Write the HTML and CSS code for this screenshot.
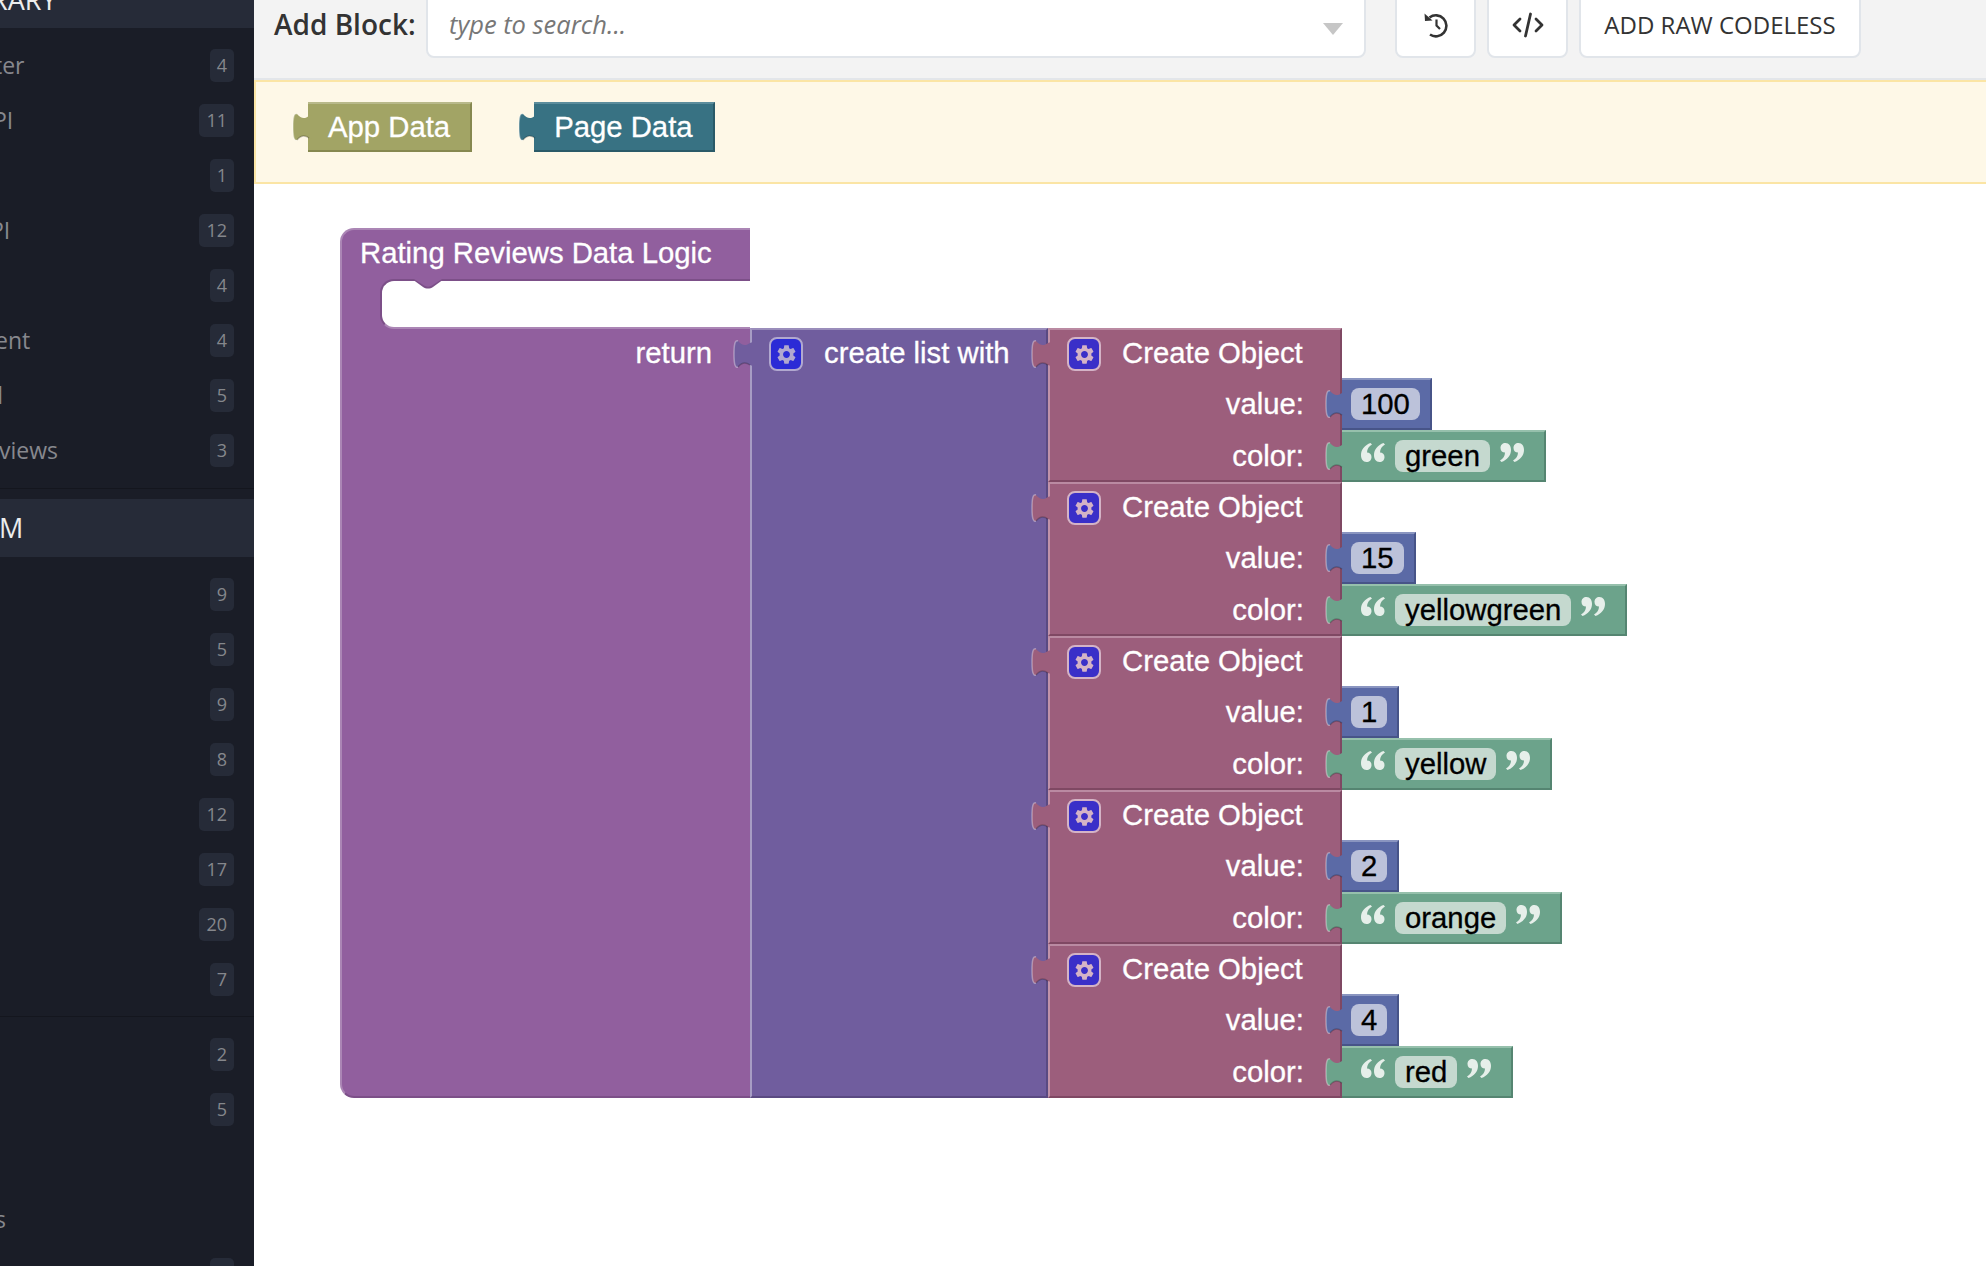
FILE: index.html
```html
<!DOCTYPE html>
<html lang="en">
<head>
    <meta charset="UTF-8">
    <title>Rating Reviews Data Logic</title>
    <link rel="stylesheet" href="styles.css">
</head>
<body>
    <svg class="sprite" xmlns="http://www.w3.org/2000/svg">
      <symbol id="tab" viewBox="0 0 20 28">
        <path d="M20 2L17 3C13 6 9 6 5 1C2 0 1 4 1 14C1 24 2 28 5 27C9 22 13 22 17 25L20 26Z"/>
        <path d="M5 1C2 0 1 4 1 14C1 24 2 28 5 27" fill="none" stroke="#fff" stroke-opacity=".35" stroke-width="1.5"/>
        <path d="M5 27C9 22 13 22 17 25" fill="none" stroke="#000" stroke-opacity=".22" stroke-width="1.5"/>
      </symbol>
      <symbol id="gear" viewBox="0 0 24 24">
        <path fill-rule="evenodd" d="M19.14 12.94c.04-.3.06-.61.06-.94 0-.32-.02-.64-.07-.94l2.03-1.58c.18-.14.23-.41.12-.61l-1.92-3.32c-.12-.22-.37-.29-.59-.22l-2.39.96c-.5-.38-1.03-.7-1.62-.94l-.36-2.54c-.04-.24-.24-.41-.48-.41h-3.84c-.24 0-.43.17-.47.41l-.36 2.54c-.59.24-1.13.57-1.62.94l-2.39-.96c-.22-.08-.47 0-.59.22L2.74 8.87c-.12.21-.08.47.12.61l2.03 1.58c-.05.3-.09.63-.09.94s.02.64.07.94l-2.03 1.58c-.18.14-.23.41-.12.61l1.92 3.32c.12.22.37.29.59.22l2.39-.96c.5.38 1.03.7 1.62.94l.36 2.54c.05.24.24.41.48.41h3.84c.24 0 .44-.17.47-.41l.36-2.54c.59-.24 1.13-.56 1.62-.94l2.39.96c.22.08.47 0 .59-.22l1.92-3.32c.12-.22.07-.47-.12-.61l-2.01-1.58zM12 15.6c-1.98 0-3.6-1.62-3.6-3.6s1.62-3.6 3.6-3.6 3.6 1.62 3.6 3.6-1.62 3.6-3.6 3.6z"/>
      </symbol>
      <symbol id="quote" viewBox="0 0 24 19">
        <path d="M9.5 0C4 2 0 6.500 0 12C0 16 2 19 5.500 19C8.500 19 10.500 17 10.500 14C10.500 11 8.500 9.500 6 9.500C6 6 8 3 11 1.500Z"/>
        <path d="M22.500 0C17 2 13 6.500 13 12C13 16 15 19 18.500 19C21.500 19 23.500 17 23.500 14C23.500 11 21.500 9.500 19 9.500C19 6 21 3 24 1.500Z"/>
      </symbol>
    </svg>

    <div class="app">
      <!-- barra lateral, cortada na esquerda como no original -->
      <aside class="sidebar">
        <div class="side-head side-head-top"><span>RARY</span></div>
        <ul class="side-list">
          <li><span class="side-label cut-ter">ter</span><span class="badge">4</span></li>
          <li><span class="side-label cut-pi">PI</span><span class="badge">11</span></li>
          <li><span class="side-label"></span><span class="badge">1</span></li>
          <li><span class="side-label cut-pi2">PI</span><span class="badge">12</span></li>
          <li><span class="side-label"></span><span class="badge">4</span></li>
          <li><span class="side-label cut-ent">ent</span><span class="badge">4</span></li>
          <li><span class="side-label cut-d">d</span><span class="badge">5</span></li>
          <li><span class="side-label cut-views">views</span><span class="badge">3</span></li>
        </ul>
        <div class="side-head"><span>M</span></div>
        <ul class="side-list side-list-mid">
          <li><span class="side-label"></span><span class="badge">9</span></li>
          <li><span class="side-label"></span><span class="badge">5</span></li>
          <li><span class="side-label"></span><span class="badge">9</span></li>
          <li><span class="side-label"></span><span class="badge">8</span></li>
          <li><span class="side-label"></span><span class="badge">12</span></li>
          <li><span class="side-label"></span><span class="badge">17</span></li>
          <li><span class="side-label"></span><span class="badge">20</span></li>
          <li><span class="side-label"></span><span class="badge">7</span></li>
        </ul>
        <ul class="side-list side-list-last">
          <li><span class="side-label"></span><span class="badge">2</span></li>
          <li><span class="side-label"></span><span class="badge">5</span></li>
          <li><span class="side-label"></span></li>
          <li><span class="side-label cut-s">s</span></li>
          <li><span class="side-label"></span><span class="badge">3</span></li>
        </ul>
      </aside>

      <main class="main">
        <div class="toolbar">
          <label class="add-label">Add Block:</label>
          <div class="search">
            <span class="search-hint">type to search...</span>
            <span class="search-caret"></span>
          </div>
          <button class="tool-btn tool-icon">
            <svg width="26" height="26" viewBox="0 0 26 26" fill="none" stroke="#333" stroke-width="2.600">
              <path d="M6.500 5.500A10.500 10.500 0 1 1 7 22.500"/>
              <path d="M13.500 7.500V13.500L17 17" stroke-width="2.200"/>
              <path d="M1.500 1.500L2 9L9.500 8.500Z" fill="#333" stroke="none"/>
            </svg>
          </button>
          <button class="tool-btn tool-icon">
            <svg width="32" height="26" viewBox="0 0 32 26" fill="none" stroke="#333" stroke-width="2.800" stroke-linecap="round" stroke-linejoin="round">
              <path d="M8 7L2 13L8 19"/>
              <path d="M24 7L30 13L24 19"/>
              <path d="M18.500 2L13.500 24"/>
            </svg>
          </button>
          <button class="tool-btn tool-text">ADD RAW CODELESS</button>
        </div>

        <div class="banner">
          <div class="chip chip-app">
            <svg class="tab"><use href="#tab"/></svg>
            App Data
          </div>
          <div class="chip chip-page">
            <svg class="tab"><use href="#tab"/></svg>
            Page Data
          </div>
        </div>

        <div class="workspace">
          <div class="fn-hat">Rating Reviews Data Logic</div>
          <div class="fn-mouth">
            <div class="fn-gap">
              <svg class="fn-notch" width="32" height="11" viewBox="0 0 32 11">
                <path d="M0 0L11 8C14 10 18 10 21 8L32 0Z" fill="#7c4f88"/>
                <path d="M2 0L12 6.500C14.500 8 17.500 8 20 6.500L30 0Z" fill="#915f9e"/>
              </svg>
            </div>
          </div>
          <div class="fn-body">
            <div class="fn-return">return</div>
            <div class="list-block">
              <svg class="tab"><use href="#tab"/></svg>
              <div class="head-line">
                <span class="cog"><svg width="23" height="23"><use href="#gear"/></svg></span>
                create list with
              </div>
            </div>
            <div class="objects">

              <div class="obj">
                <div class="obj-face">
                  <svg class="tab"><use href="#tab"/></svg>
                  <div class="head-line">
                    <span class="cog"><svg width="23" height="23"><use href="#gear"/></svg></span>
                    Create Object
                  </div>
                  <div class="obj-label">value:</div>
                  <div class="obj-label">color:</div>
                </div>
                <div class="obj-inputs">
                  <div class="num">
                    <svg class="tab"><use href="#tab"/></svg>
                    <span class="field">100</span>
                  </div>
                  <div class="str">
                    <svg class="tab"><use href="#tab"/></svg>
                    <svg class="quote"><use href="#quote"/></svg>
                    <span class="field">green</span>
                    <svg class="quote quote-end"><use href="#quote"/></svg>
                  </div>
                </div>
              </div>

              <div class="obj">
                <div class="obj-face">
                  <svg class="tab"><use href="#tab"/></svg>
                  <div class="head-line">
                    <span class="cog"><svg width="23" height="23"><use href="#gear"/></svg></span>
                    Create Object
                  </div>
                  <div class="obj-label">value:</div>
                  <div class="obj-label">color:</div>
                </div>
                <div class="obj-inputs">
                  <div class="num">
                    <svg class="tab"><use href="#tab"/></svg>
                    <span class="field">15</span>
                  </div>
                  <div class="str">
                    <svg class="tab"><use href="#tab"/></svg>
                    <svg class="quote"><use href="#quote"/></svg>
                    <span class="field">yellowgreen</span>
                    <svg class="quote quote-end"><use href="#quote"/></svg>
                  </div>
                </div>
              </div>

              <div class="obj">
                <div class="obj-face">
                  <svg class="tab"><use href="#tab"/></svg>
                  <div class="head-line">
                    <span class="cog"><svg width="23" height="23"><use href="#gear"/></svg></span>
                    Create Object
                  </div>
                  <div class="obj-label">value:</div>
                  <div class="obj-label">color:</div>
                </div>
                <div class="obj-inputs">
                  <div class="num">
                    <svg class="tab"><use href="#tab"/></svg>
                    <span class="field">1</span>
                  </div>
                  <div class="str">
                    <svg class="tab"><use href="#tab"/></svg>
                    <svg class="quote"><use href="#quote"/></svg>
                    <span class="field">yellow</span>
                    <svg class="quote quote-end"><use href="#quote"/></svg>
                  </div>
                </div>
              </div>

              <div class="obj">
                <div class="obj-face">
                  <svg class="tab"><use href="#tab"/></svg>
                  <div class="head-line">
                    <span class="cog"><svg width="23" height="23"><use href="#gear"/></svg></span>
                    Create Object
                  </div>
                  <div class="obj-label">value:</div>
                  <div class="obj-label">color:</div>
                </div>
                <div class="obj-inputs">
                  <div class="num">
                    <svg class="tab"><use href="#tab"/></svg>
                    <span class="field">2</span>
                  </div>
                  <div class="str">
                    <svg class="tab"><use href="#tab"/></svg>
                    <svg class="quote"><use href="#quote"/></svg>
                    <span class="field">orange</span>
                    <svg class="quote quote-end"><use href="#quote"/></svg>
                  </div>
                </div>
              </div>

              <div class="obj">
                <div class="obj-face">
                  <svg class="tab"><use href="#tab"/></svg>
                  <div class="head-line">
                    <span class="cog"><svg width="23" height="23"><use href="#gear"/></svg></span>
                    Create Object
                  </div>
                  <div class="obj-label">value:</div>
                  <div class="obj-label">color:</div>
                </div>
                <div class="obj-inputs">
                  <div class="num">
                    <svg class="tab"><use href="#tab"/></svg>
                    <span class="field">4</span>
                  </div>
                  <div class="str">
                    <svg class="tab"><use href="#tab"/></svg>
                    <svg class="quote"><use href="#quote"/></svg>
                    <span class="field">red</span>
                    <svg class="quote quote-end"><use href="#quote"/></svg>
                  </div>
                </div>
              </div>

            </div>
          </div>
        </div>
      </main>
    </div>
</body>
</html>
```

FILE: styles.css
```css
* {
  box-sizing: border-box;
}

html, body {
  margin: 0;
  height: 100%;
  overflow: hidden;
  background: #fff;
}

.sprite {
  display: none;
}

.app {
  display: flex;
  height: 1266px;
  overflow: hidden;
}

/* sidebar */

.sidebar {
  flex: none;
  width: 254px;
  background: #1a1d27;
  overflow: hidden;
  font-family: "Open Sans", sans-serif;
}

.side-head {
  height: 58px;
  background: #262b38;
  color: #eceded;
  font-size: 27px;
  line-height: 58px;
  white-space: nowrap;
}

.side-head span {
  display: block;
  margin-left: -1px;
}

.side-head-top {
  height: 28px;
  line-height: 0;
}

.side-head-top span {
  margin-left: -9px;
}

.side-list {
  list-style: none;
  margin: 0 0 10px;
  padding: 10px 20px 10px 0;
  border-bottom: 1px solid #14161e;
}

.side-list li {
  display: flex;
  align-items: center;
  justify-content: space-between;
  height: 55px;
}

.side-list-mid {
  margin-bottom: 0;
  padding-bottom: 9px;
}

.side-list-last {
  margin: 0;
  padding-top: 10px;
  border: 0;
}

.side-label {
  padding-bottom: 1px;
  color: #87888e;
  font-size: 23px;
  white-space: nowrap;
}

.cut-ter { margin-left: -6px; }
.cut-pi { margin-left: -7px; }
.cut-pi2 { margin-left: -10px; }
.cut-ent { margin-left: -5px; }
.cut-d { margin-left: -11px; }
.cut-views { margin-left: -1px; }
.cut-s { margin-left: -5px; }

.badge {
  min-width: 23px;
  height: 33px;
  padding: 0 7px;
  border-radius: 5px;
  background: #262b38;
  color: #85878c;
  font-size: 18px;
  line-height: 33px;
  text-align: center;
}

/* toolbar */

.main {
  flex: 1;
  min-width: 0;
}

.toolbar {
  display: flex;
  align-items: flex-end;
  height: 80px;
  padding: 0 0 20px 20px;
  background: #f3f3f3;
  border-bottom: 2px solid #e3e6ea;
  font-family: "Open Sans", sans-serif;
  color: #333;
}

.add-label {
  width: 152px;
  height: 66px;
  flex: none;
  font-size: 28px;
  font-weight: 600;
  line-height: 64px;
  white-space: nowrap;
}

.search {
  display: flex;
  align-items: center;
  justify-content: space-between;
  flex: none;
  width: 940px;
  height: 66px;
  padding: 0 21px 0 21px;
  background: #fff;
  border: 2px solid #e1e5ea;
  border-radius: 8px;
}

.search-hint {
  padding-bottom: 3px;
  color: #777;
  font-size: 25.500px;
  font-style: italic;
}

.search-caret {
  margin-top: 7px;
  border-top: 12px solid #c6c6c6;
  border-left: 10px solid transparent;
  border-right: 10px solid transparent;
}

.tool-btn {
  display: flex;
  align-items: center;
  justify-content: center;
  flex: none;
  height: 66px;
  margin-left: 11px;
  padding: 0;
  background: #fff;
  border: 2px solid #e1e5ea;
  border-radius: 8px;
  color: #333;
  font-family: "Open Sans", sans-serif;
}

.tool-icon {
  width: 81px;
}

.search + .tool-icon {
  margin-left: 29px;
}

.tool-text {
  width: 282px;
  padding-bottom: 2px;
  font-size: 24px;
}

/* banner com blocos soltos */

.banner {
  display: flex;
  gap: 62px;
  height: 104px;
  padding: 20px 0 0 52px;
  background: #fef8e7;
  border: 2px solid #fbe5a5;
  border-right: 0;
}

/* blocos */

.chip, .fn-hat, .fn-return, .head-line, .obj-label, .num, .str {
  font-family: "Liberation Sans", Arial, sans-serif;
  font-size: 29.3px;
  color: #fff;
  -webkit-text-stroke: 0.3px;
}

.tab {
  position: absolute;
  left: -17px;
  top: 12px;
  width: 20px;
  height: 28px;
  fill: var(--face);
}

.chip {
  --face: #a2a465;
  position: relative;
  height: 50px;
  padding: 0 20px;
  background: var(--face);
  border-top: 2px solid #b8b98a;
  border-right: 2px solid #868850;
  border-bottom: 2px solid #868850;
  line-height: 46px;
}

.chip .tab {
  left: -16px;
  top: 9px;
}

.chip-page {
  --face: #387283;
  border-top-color: #5c8d9c;
  border-right-color: #2a5a68;
  border-bottom-color: #2a5a68;
}

.workspace {
  margin: 44px 0 0 86px;
}

.fn-hat {
  width: 410px;
  height: 51px;
  padding-left: 18px;
  background: #915f9e;
  border-top: 2px solid #ab86b5;
  border-left: 2px solid #ab86b5;
  border-radius: 14px 0 0 0;
  line-height: 45px;
}

.fn-mouth {
  width: 410px;
  height: 50px;
  margin-bottom: -1px;
  padding-left: 40px;
  background: linear-gradient(to right, #ab86b5 2px, #915f9e 2px, #915f9e 60px, transparent 60px);
}

.fn-gap {
  position: relative;
  height: 100%;
  background: #fff;
  border-top: 2px solid #7c4f88;
  border-left: 2px solid #7c4f88;
  border-bottom: 2px solid #ab86b5;
  border-radius: 14px 0 0 14px;
}

.fn-notch {
  position: absolute;
  left: 30px;
  top: -2px;
}

.fn-body {
  display: flex;
  height: 770px;
}

.fn-return {
  flex: none;
  width: 410px;
  padding-right: 38px;
  background: #915f9e;
  border-left: 2px solid #ab86b5;
  border-bottom: 2px solid #7c4f88;
  border-radius: 0 0 0 14px;
  line-height: 49px;
  text-align: right;
}

.list-block {
  --face: #705d9e;
  position: relative;
  flex: none;
  width: 298px;
  background: var(--face);
  border-left: 2px solid #a79dc4;
  border-top: 2px solid #9a8dbb;
  border-right: 2px solid #5a4a82;
  border-bottom: 2px solid #5a4a82;
}

.list-block .tab {
  left: -19px;
  top: 10px;
}

.head-line {
  display: flex;
  align-items: center;
  gap: 21px;
  height: 46px;
  margin-bottom: 2px;
  padding-left: 17px;
}

.cog {
  display: flex;
  align-items: center;
  justify-content: center;
  width: 34px;
  height: 34px;
  margin-top: 2px;
  border: 2px solid #b1a8cf;
  border-radius: 8px;
  background: #2b2bd6;
  fill: #b1a8cf;
}

.objects {
  flex: none;
  width: 292px;
}

.obj {
  display: flex;
  height: 154px;
}

.obj-face {
  --face: #9c5e7c;
  position: relative;
  flex: none;
  width: 294px;
  height: 154px;
  background: var(--face);
  border-left: 2px solid #c193a9;
  border-top: 2px solid #ba8aa2;
  border-right: 2px solid #7f4863;
  border-bottom: 2px solid #7f4863;
}

.obj-face .tab {
  left: -19px;
  top: 10px;
}

.obj-face .cog {
  background: #3a2fc8;
  border-color: #d4b3c6;
  fill: #d4b3c6;
}

.obj-label {
  height: 52px;
  padding-right: 36px;
  line-height: 52px;
  text-align: right;
}

.obj-inputs {
  flex: none;
  padding-top: 50px;
}

.num, .str {
  position: relative;
  display: flex;
  align-items: center;
  width: max-content;
  height: 52px;
  color: #000;
  border-top: 2px solid;
  border-right: 2px solid;
  border-bottom: 2px solid;
}

.num {
  --face: #5b6aa6;
  padding: 0 10px 0 9px;
  background: var(--face);
  border-color: #8a95c0 #475488 #475488;
}

.str {
  --face: #6ca38b;
  padding: 0 20px 0 19px;
  background: var(--face);
  border-color: #96c0ac #558571 #558571;
}

.num .tab, .str .tab {
  top: 10px;
}

.field {
  height: 32px;
  padding: 0 10px;
  background: #bcc2da;
  border-radius: 8px;
  line-height: 31px;
}

.str .field {
  margin: 0 10px;
  background: #c5d9cf;
}

.quote {
  flex: none;
  width: 24px;
  height: 19px;
  margin-top: -8px;
  fill: #e6efea;
}

.quote-end {
  transform: rotate(180deg);
}
```
